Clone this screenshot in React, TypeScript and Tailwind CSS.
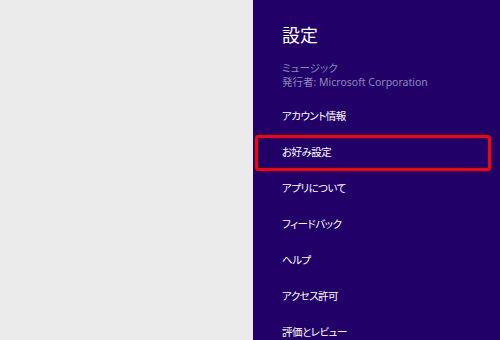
import React from "react";

const items = [
  "アカウント情報",
  "お好み設定",
  "アプリについて",
  "フィードバック",
  "ヘルプ",
  "アクセス許可",
  "評価とレビュー",
];

export default function App() {
  return (
    <div
      className="flex h-[340px] w-[500px] overflow-hidden [font-family:'Noto_Sans','Noto_Sans_CJK_JP',sans-serif] [font-feature-settings:'palt']"
    >
      <div className="h-full w-[253px] bg-[#ebebeb]" />
      <div className="flex h-full flex-1 flex-col bg-[#210068] text-white">
        <div className="pl-[29px] pt-[22px] text-[18px] leading-[26px]">設定</div>
        <div className="mt-[13px] pl-[29px] text-[10.5px] leading-[14px] text-[#8f88bd]">
          <div>ミュージック</div>
          <div>発行者: Microsoft Corporation</div>
        </div>
        <div className="mt-[10px] flex flex-col">
          {items.map((t, i) => (
            <div
              key={t}
              className={
                "ml-[2px] mr-[9px] flex h-[36px] items-center rounded-[3px] border-[3px] pl-[24px] text-[10.5px] tracking-[-0.5px] " +
                (i === 1 ? "border-[#ff0000]" : "border-transparent")
              }
            >
              {t}
            </div>
          ))}
        </div>
      </div>
    </div>
  );
}
